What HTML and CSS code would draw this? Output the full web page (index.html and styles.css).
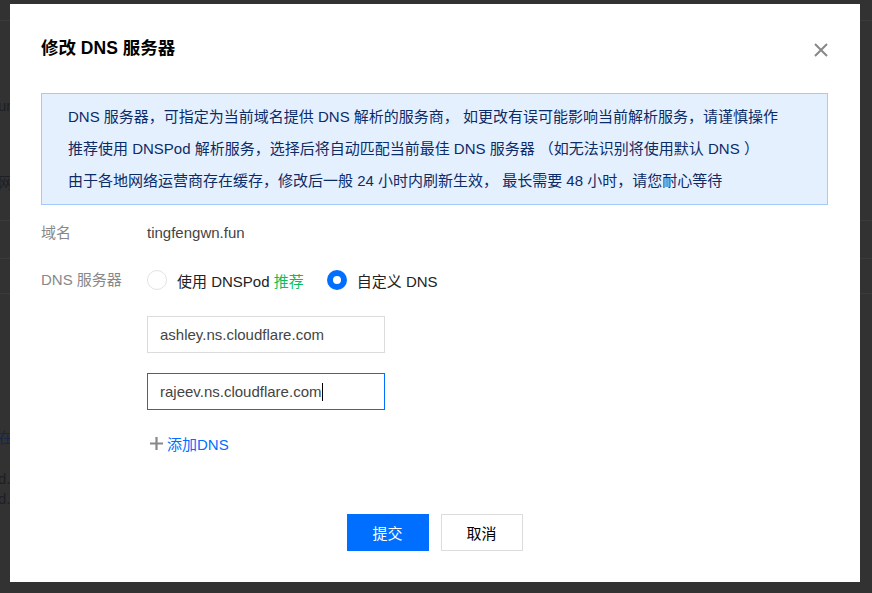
FILE: index.html
```html
<!DOCTYPE html>
<html lang="zh-CN">
<head>
<meta charset="utf-8">
<title>修改 DNS 服务器</title>
<link rel="stylesheet" href="styles.css">
</head>
<body>
<div class="page">
  <div class="bg-row bg-row-top"></div>
  <div class="bg-row bg-row-main">
    <div class="bg-text bg-t1">url</div>
    <div class="bg-text bg-t2">网络</div>
  </div>
  <div class="bg-row bg-row-a"></div>
  <div class="bg-row bg-row-b"></div>
  <div class="bg-lower">
    <div class="bg-text bg-link">在[</div>
    <div class="bg-text bg-t3">d.</div>
    <div class="bg-text bg-t4">d.</div>
  </div>
</div>

<div class="mask">
  <div class="dialog">
    <div class="dialog-head">
      <h2 class="dialog-title">修改 DNS 服务器</h2>
      <span class="dialog-close" aria-label="关闭">
        <svg width="14" height="14" viewBox="0 0 14 14"><path d="M1 1 L13 13 M13 1 L1 13" stroke="#888" stroke-width="2" fill="none"/></svg>
      </span>
    </div>

    <div class="alert">
      <p>DNS 服务器，可指定为当前域名提供 DNS 解析的服务商， 如更改有误可能影响当前解析服务，请谨慎操作</p>
      <p>推荐使用 DNSPod 解析服务，选择后将自动匹配当前最佳 DNS 服务器 （如无法识别将使用默认 DNS ）</p>
      <p>由于各地网络运营商存在缓存，修改后一般 24 小时内刷新生效， 最长需要 48 小时，请您耐心等待</p>
    </div>

    <div class="form">
      <div class="form-label">域名</div>
      <div class="form-value form-text">tingfengwn.fun</div>

      <div class="form-label">DNS 服务器</div>
      <div class="form-value">
        <div class="radio-group">
          <span class="radio"></span>
          <span class="radio-text">使用 DNSPod <span class="tag-green">推荐</span></span>
          <span class="radio radio-checked"></span>
          <span class="radio-text">自定义 DNS</span>
        </div>
        <div class="ns-list">
          <div class="input">ashley.ns.cloudflare.com</div>
          <div class="input input-focus">rajeev.ns.cloudflare.com<span class="caret"></span></div>
        </div>
        <div class="add-dns">
          <svg class="add-icon" width="13" height="13" viewBox="0 0 13 13"><path d="M6.5 0 V13 M0 6.5 H13" stroke="#888" stroke-width="2.2" fill="none"/></svg>
          <span class="add-text">添加DNS</span>
        </div>
      </div>
    </div>

    <div class="dialog-footer">
      <button class="btn btn-primary">提交</button>
      <button class="btn">取消</button>
    </div>
  </div>
</div>
</body>
</html>
```

FILE: styles.css
```css
html, body {
  margin: 0;
  padding: 0;
}

body {
  width: 872px;
  height: 593px;
  overflow: hidden;
  background: #323232;
  font-family: "Liberation Sans", "Noto Sans CJK SC", sans-serif;
  font-size: 15px;
  color: #333;
}

/* ---------- background page (seen through the mask) ---------- */
.page {
  width: 872px;
  height: 593px;
}

.bg-row {
  border-bottom: 1px solid #3a3a3a;
}

.bg-row-top { height: 20px; }
.bg-row-main { height: 199px; }
.bg-row-a { height: 37px; }
.bg-row-b { height: 34px; }

.bg-text {
  color: #1d1f24;
  font-size: 15px;
  line-height: 20px;
  margin-left: -2px;
  white-space: nowrap;
}

.bg-t1 { padding-top: 75px; }
.bg-t2 { padding-top: 57px; }

.bg-lower { padding-top: 134px; }
.bg-link { color: #17264a; }
.bg-t3 { margin-top: 21px; }
.bg-t4 { margin-top: 0; }

/* ---------- modal ---------- */
.mask {
  position: fixed;
  inset: 0;
  padding: 4px 0 0 10px;
}

.dialog {
  width: 850px;
  height: 578px;
  box-sizing: border-box;
  background: #fff;
  padding: 31px 32px 0 31px;
}

.dialog-head {
  display: flex;
  align-items: center;
  justify-content: space-between;
  height: 26px;
}

.dialog-title {
  margin: 0;
  font-size: 17.5px;
  line-height: 26px;
  font-weight: bold;
  color: #000;
}

.dialog-close {
  display: block;
  width: 14px;
  height: 14px;
  margin-top: 4px;
}

.dialog-close svg { display: block; }

.alert {
  margin-top: 32px;
  background: #e5f0ff;
  border: 1px solid #a2cbfb;
  padding: 7px 26px;
  color: #0b2c66;
}

.alert p {
  margin: 0;
  line-height: 32px;
  white-space: nowrap;
}

/* ---------- form ---------- */
.form {
  margin-top: 12px;
  display: grid;
  grid-template-columns: 106px 1fr;
  row-gap: 15px;
}

.form-label {
  color: #888;
  line-height: 32px;
}

.form-text {
  line-height: 32px;
  color: #444;
}

.radio-group {
  display: flex;
  align-items: center;
  height: 32px;
}

.radio {
  width: 20px;
  height: 20px;
  box-sizing: border-box;
  border: 1px solid #e3e3e6;
  border-radius: 50%;
  background: #fff;
}

.radio-checked {
  border: 6px solid #006eff;
  margin-left: 23px;
}

.radio-text {
  margin-left: 10px;
  color: #222;
}

.tag-green { color: #0abf5b; }

.ns-list {
  margin-top: 20px;
  display: flex;
  flex-direction: column;
  gap: 20px;
}

.input {
  width: 238px;
  height: 37px;
  box-sizing: border-box;
  border: 1px solid #dcdcdc;
  padding: 0 12px;
  line-height: 35px;
  color: #444;
  display: flex;
  align-items: center;
}

.input-focus {
  border-color: #006eff;
}

.caret {
  display: inline-block;
  width: 1px;
  height: 18px;
  background: #000;
  margin-left: 1px;
}

.add-dns {
  margin-top: 23px;
  display: flex;
  align-items: center;
  height: 20px;
}

.add-icon {
  display: block;
  margin-left: 3px;
}

.add-text {
  margin-left: 4px;
  color: #006eff;
}

/* ---------- footer ---------- */
.dialog-footer {
  margin-top: 61px;
  display: flex;
  justify-content: center;
  gap: 12px;
}

.btn {
  width: 82px;
  height: 37px;
  box-sizing: border-box;
  border: 1px solid #dcdcdc;
  background: #fff;
  color: #000;
  font-family: inherit;
  font-size: 15px;
  padding: 0;
  cursor: pointer;
}

.btn-primary {
  background: #006eff;
  border-color: #006eff;
  color: #fff;
}
```
